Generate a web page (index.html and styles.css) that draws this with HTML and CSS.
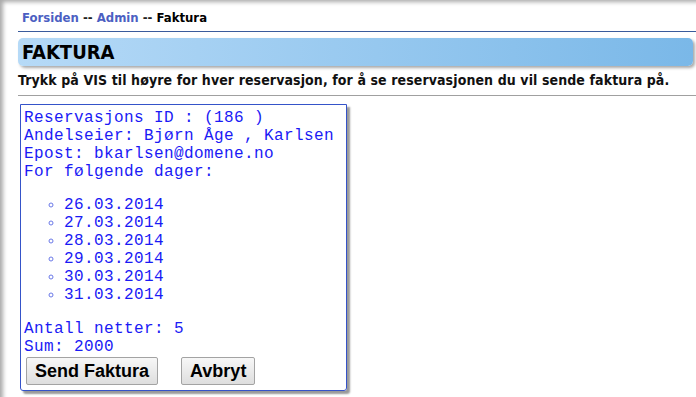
FILE: index.html
```
<!DOCTYPE html>
<html lang="no">
<head>
    <meta charset="UTF-8">
    <title>Faktura</title>
    <link rel="stylesheet" href="styles.css">
</head>
<body>
    <div class="page">
        <div class="crumbs">
            <a href="#">Forsiden</a> -- <a href="#">Admin</a> -- <span>Faktura</span>
        </div>

        <h1 class="title">FAKTURA</h1>
        <p class="intro">Trykk på VIS til høyre for hver reservasjon, for å se reservasjonen du vil sende faktura på.</p>

        <!-- Faktura -->
        <div class="invoice">
            <div>Reservasjons ID : (186 )</div>
            <div>Andelseier: Bjørn Åge , Karlsen</div>
            <div>Epost: bkarlsen@domene.no</div>
            <div>For følgende dager:</div>
            <ul class="days">
                <li>26.03.2014</li>
                <li>27.03.2014</li>
                <li>28.03.2014</li>
                <li>29.03.2014</li>
                <li>30.03.2014</li>
                <li>31.03.2014</li>
            </ul>
            <div>Antall netter: 5</div>
            <div>Sum: 2000</div>
            <div class="actions">
                <button>Send Faktura</button>
                <button>Avbryt</button>
            </div>
        </div>
    </div>
</body>
</html>
```
FILE: styles.css
```
* {
    box-sizing: border-box;
    margin: 0;
    padding: 0;
}
body {
    background: #fff;
    font-family: "DejaVu Sans Condensed", "DejaVu Sans", Verdana, sans-serif;
}
.page {
    min-height: 397px;
    padding-left: 18px;
    box-shadow: inset 5px 4px 4px -2px #aaa;
}
.crumbs {
    padding: 10px 0 5px 4px;
    font-size: 13px;
    font-weight: bold;
    line-height: 16px;
    color: #222;
    border-bottom: 1px solid #3a5b9c;
}
.crumbs a {
    color: #4c5fc2;
    text-decoration: none;
}
.crumbs span {
    color: #000;
}
.title {
    margin: 6px 3px 0 0;
    height: 28px;
    padding-left: 4px;
    font-size: 20px;
    line-height: 28px;
    color: #000;
    background: linear-gradient(to right, #b6daf7, #7ab8e8);
    border-radius: 5px;
    box-shadow: 2px 2px 3px #aaa;
}
.intro {
    margin-top: 6px;
    padding-bottom: 7px;
    font-size: 14px;
    font-weight: bold;
    letter-spacing: 0.1px;
    line-height: 16px;
    color: #111;
    border-bottom: 1px solid #a0a0a0;
}
.invoice {
    width: 327px;
    margin: 8px 0 0 2px;
    padding: 4px 3px 5px 3px;
    border: 1px solid #3553c9;
    border-radius: 0 0 3px 3px;
    box-shadow: 3px 3px 2px #999;
    font-family: "Liberation Mono", "Courier New", monospace;
    font-size: 16px;
    letter-spacing: 0.4px;
    line-height: 18px;
    color: #1a1af5;
}
.days {
    margin: 15px 0 16px;
    padding-left: 40px;
    list-style: circle;
}
.days li::marker {
    color: #6a78e8;
}
.actions {
    display: flex;
    gap: 23px;
    margin: 1px 0 0 2px;
}
button {
    height: 28px;
    padding: 0 8px;
    font-family: "Liberation Sans", Arial, sans-serif;
    font-size: 18px;
    font-weight: bold;
    letter-spacing: 0;
    color: #000;
    background: linear-gradient(#f7f7f7, #dedede);
    border: 1px solid #a3a3a3;
    border-radius: 2px;
}
```
